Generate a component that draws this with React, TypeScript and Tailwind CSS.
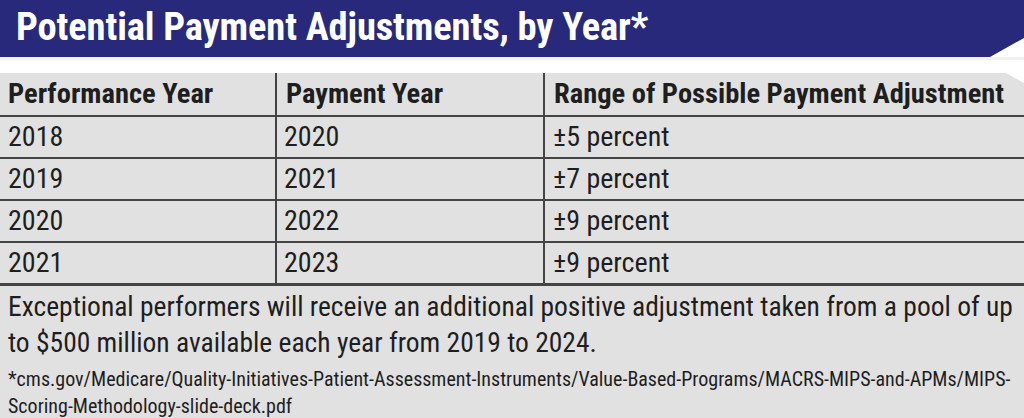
const rows = [
  ["2018", "2020", "±5 percent"],
  ["2019", "2021", "±7 percent"],
  ["2020", "2022", "±9 percent"],
  ["2021", "2023", "±9 percent"],
];

export default function App() {
  return (
    <div className="w-[1024px] h-[418px] overflow-hidden bg-white font-['Roboto_Condensed','Roboto',sans-serif] text-[#1e1e1e]">
      <div className="h-[57px] bg-[#28297b] [clip-path:polygon(0_0,100%_0,100%_38px,990px_100%,0_100%)] flex items-center pl-[16px] pb-[2px]">
        <h1 className="text-white font-bold text-[38.5px] leading-none tracking-[-0.1px]">
          Potential Payment Adjustments, by Year*
        </h1>
      </div>
      <div className="h-[16px] border-t-[3px] border-[#f0f0f0] bg-white" />
      <div className="bg-[#e1e1e1] [clip-path:polygon(0_0,1006px_0,100%_10px,100%_100%,0_100%)]">
        <div className="grid grid-cols-[275px_268px_1fr]">
          <div className="h-[44px] flex items-center pl-[8px] font-bold text-[28.5px] border-b-2 border-[#444]">Performance Year</div>
          <div className="h-[44px] flex items-center pl-[9px] font-bold text-[28.5px] border-b-2 border-l-2 border-[#444]">Payment Year</div>
          <div className="h-[44px] flex items-center pl-[9px] font-bold text-[28.5px] border-b-2 border-l-2 border-[#444]">Range of Possible Payment Adjustment</div>
          {rows.map((r, i) => (
            <div key={i} className="contents">
              <div className={`flex items-center pl-[8px] text-[28px] border-[#444] ${i === rows.length - 1 ? "h-[43px] border-b-[3px]" : "h-[42px] border-b-2"}`}>{r[0]}</div>
              <div className={`flex items-center pl-[7px] text-[28px] border-l-2 border-[#444] ${i === rows.length - 1 ? "h-[43px] border-b-[3px]" : "h-[42px] border-b-2"}`}>{r[1]}</div>
              <div className={`flex items-center pl-[8px] text-[28px] border-l-2 border-[#444] ${i === rows.length - 1 ? "h-[43px] border-b-[3px]" : "h-[42px] border-b-2"}`}>{r[2]}</div>
            </div>
          ))}
        </div>
        <p className="pl-[8px] pt-[3px] text-[27.5px] leading-[36px] whitespace-nowrap">
          Exceptional performers will receive an additional positive adjustment taken from a pool of up
          <br />
          to $500 million available each year from 2019 to 2024.
        </p>
        <p className="pl-[8px] pt-[5px] text-[20px] leading-[27px] whitespace-nowrap">
          *cms.gov/Medicare/Quality-Initiatives-Patient-Assessment-Instruments/Value-Based-Programs/MACRS-MIPS-and-APMs/MIPS-
          <br />
          Scoring-Methodology-slide-deck.pdf
        </p>
        <div className="h-[20px]" />
      </div>
    </div>
  );
}
